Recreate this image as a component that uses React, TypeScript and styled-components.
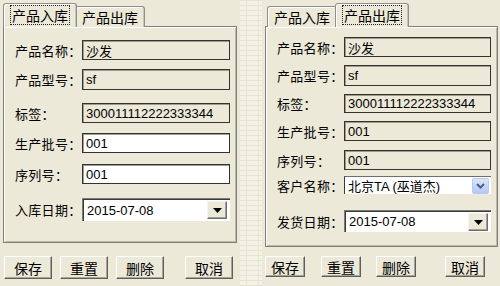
import React from "react";
import styled, { createGlobalStyle } from "styled-components";

const GlobalStyle = createGlobalStyle`
  * { box-sizing: border-box; }
  html, body { margin: 0; padding: 0; }
  body {
    font-family: "Noto Sans CJK SC", "Liberation Sans", sans-serif;
    color: #000;
    background: #ece9d8;
  }
`;

type Row = {
  label: string;
  value: string;
  kind: "text" | "date" | "select";
  disabled?: boolean;
  mt: number;
  h: number;
};

type PanelProps = {
  width: number;
  pageWidth: number;
  pageHeight: number;
  active: number;
  rows: Row[];
  btnTop: number;
  btnH: number;
  btnW: number;
  btnGaps: number[];
};

const TABS = ["产品入库", "产品出库"];

const leftRows: Row[] = [
  { label: "产品名称：", value: "沙发", kind: "text", disabled: true, mt: 13, h: 20 },
  { label: "产品型号：", value: "sf", kind: "text", disabled: true, mt: 9, h: 21 },
  { label: "标签：", value: "300011112222333344", kind: "text", disabled: true, mt: 13, h: 20 },
  { label: "生产批号：", value: "001", kind: "text", mt: 10, h: 20 },
  { label: "序列号：", value: "001", kind: "text", mt: 11, h: 20 },
  { label: "入库日期：", value: "2015-07-08", kind: "date", mt: 14, h: 23 },
];

const rightRows: Row[] = [
  { label: "产品名称：", value: "沙发", kind: "text", disabled: true, mt: 10, h: 20 },
  { label: "产品型号：", value: "sf", kind: "text", disabled: true, mt: 8, h: 21 },
  { label: "标签：", value: "300011112222333344", kind: "text", disabled: true, mt: 8, h: 19 },
  { label: "生产批号：", value: "001", kind: "text", disabled: true, mt: 8, h: 20 },
  { label: "序列号：", value: "001", kind: "text", disabled: true, mt: 9, h: 20 },
  { label: "客户名称：", value: "北京TA (巫道杰)", kind: "select", mt: 6, h: 18 },
  { label: "发货日期：", value: "2015-07-08", kind: "date", mt: 16, h: 22 },
];

const Screen = styled.div`
  display: flex;
  width: 500px;
  height: 286px;
  overflow: hidden;
`;

const Pane = styled.div<{ $w: number }>`
  width: ${({ $w }) => $w}px;
  flex: none;
  background: #ece9d8;
  padding: 3px 0 0 3px;
  display: flex;
  flex-direction: column;
`;

const Strip = styled.div`
  width: 22px;
  flex: none;
  background-color: #f4f2e6;
  background-image:
    repeating-linear-gradient(0deg, #e6e2cc 0 1px, transparent 1px 5px),
    repeating-linear-gradient(90deg, transparent 0 6px, #e9e5d1 6px 7px, transparent 7px 12px);
`;

const TabRow = styled.div`
  display: flex;
  align-items: flex-end;
  height: 24px;
  padding-left: 2px;
  position: relative;
  z-index: 1;
`;

const Tab = styled.div<{ $active: boolean }>`
  height: ${({ $active }) => ($active ? 24 : 21)}px;
  margin: ${({ $active }) => ($active ? "0 -2px 0 -2px" : "0")};
  padding: ${({ $active }) => ($active ? "1px 7px 0" : "0 5px")};
  background: #ece9d8;
  border: 1px solid #8f8f8f;
  border-bottom: none;
  border-radius: 3px 3px 0 0;
  box-shadow: inset 1px 1px 0 #fff, inset -1px 0 0 #c9c5b4;
  font-size: 14px;
  line-height: 20px;
  white-space: nowrap;
  position: relative;
  z-index: ${({ $active }) => ($active ? 2 : 1)};

  span {
    display: inline-block;
    padding: 0 1px;
    outline: ${({ $active }) => ($active ? "1px dotted #222" : "none")};
    line-height: 18px;
  }
`;

const Page = styled.div<{ $w: number; $h: number }>`
  width: ${({ $w }) => $w}px;
  height: ${({ $h }) => $h}px;
  margin-top: -1px;
  border: 1px solid #7f7f7f;
  box-shadow: inset 1px 1px 0 #fff, inset -1px -1px 0 #bdb9a6;
  background: #ece9d8;
  padding-right: 6px;
`;

const FieldRow = styled.div<{ $mt: number; $h: number }>`
  display: flex;
  align-items: center;
  margin-top: ${({ $mt }) => $mt}px;
  height: ${({ $h }) => $h}px;
`;

const Label = styled.span`
  width: 78px;
  flex: none;
  padding-left: 11px;
  font-size: 13px;
  white-space: nowrap;
  letter-spacing: 0.3px;
`;

const TextBox = styled.div<{ $disabled?: boolean }>`
  flex: 1;
  height: 100%;
  display: flex;
  align-items: center;
  padding-left: 3px;
  background: ${({ $disabled }) => ($disabled ? "#ece9d8" : "#fff")};
  border: 1px solid #333;
  box-shadow: inset 1px 1px 0 #a09c8c;
  font-family: "Liberation Sans", "Noto Sans CJK SC", sans-serif;
  font-size: 13px;
  white-space: nowrap;
  overflow: hidden;
`;

const DateBox = styled.div`
  flex: 1;
  height: 100%;
  display: flex;
  align-items: stretch;
  background: #fff;
  border-top: 1px solid #7a7a7a;
  border-left: 1px solid #7a7a7a;
  box-shadow: inset 1px 1px 0 #3a3a3a;
  padding: 2px 3px 2px 4px;
  font-family: "Liberation Sans", sans-serif;
  font-size: 13px;
`;

const DateText = styled.span`
  flex: 1;
  display: flex;
  align-items: center;
`;

const DropButton = styled.div`
  width: 20px;
  height: 18px;
  align-self: flex-start;
  background: #ece9d8;
  border: 1px solid;
  border-color: #f4f3ee #6d6d6d #6d6d6d #f4f3ee;
  box-shadow: inset -1px -1px 0 #a5a29a;
  display: flex;
  align-items: center;
  justify-content: center;
`;

const SelectBox = styled.div`
  flex: 1;
  height: 100%;
  display: flex;
  align-items: center;
  background: #fff;
  border-top: 1px solid #6e6e6e;
  border-left: 1px solid #3a3a3a;
  padding: 0 2px 0 3px;
  font-family: "Liberation Sans", "Noto Sans CJK SC", sans-serif;
  font-size: 13px;
`;

const SelectText = styled.span`
  flex: 1;
  white-space: nowrap;
`;

const XpArrow = styled.div`
  width: 17px;
  height: 16px;
  border-radius: 2px;
  background: linear-gradient(#d9e5fd, #b3c8f5);
  border: 1px solid #b6c9f2;
  display: flex;
  align-items: center;
  justify-content: center;
`;

const ButtonBar = styled.div<{ $mt: number }>`
  display: flex;
  margin-top: ${({ $mt }) => $mt}px;
`;

const Btn = styled.button<{ $w: number; $h: number; $ml: number }>`
  width: ${({ $w }) => $w}px;
  height: ${({ $h }) => $h}px;
  margin-left: ${({ $ml }) => $ml}px;
  padding: 0;
  background: #ece9d8;
  border: 1px solid;
  border-color: #fff #5f5f5f #5f5f5f #fff;
  box-shadow: inset -1px -1px 0 #a9a594;
  font-family: "Noto Sans CJK SC", sans-serif;
  font-size: 14px;
  line-height: 1;
  color: #000;
`;

const Triangle = () => (
  <svg width="9" height="5" viewBox="0 0 9 5">
    <path d="M0 0h9L4.5 5z" fill="#000" />
  </svg>
);

const Chevron = () => (
  <svg width="9" height="6" viewBox="0 0 9 6">
    <path d="M1 1l3.5 3.5L8 1" fill="none" stroke="#4d6185" strokeWidth="2" />
  </svg>
);

const Panel = (p: PanelProps) => (
  <Pane $w={p.width}>
    <TabRow>
      {TABS.map((t, i) => (
        <Tab key={t} $active={i === p.active}>
          <span>{t}</span>
        </Tab>
      ))}
    </TabRow>
    <Page $w={p.pageWidth} $h={p.pageHeight}>
      {p.rows.map((r) => (
        <FieldRow key={r.label} $mt={r.mt} $h={r.h}>
          <Label>{r.label}</Label>
          {r.kind === "text" && <TextBox $disabled={r.disabled}>{r.value}</TextBox>}
          {r.kind === "date" && (
            <DateBox>
              <DateText>{r.value}</DateText>
              <DropButton>
                <Triangle />
              </DropButton>
            </DateBox>
          )}
          {r.kind === "select" && (
            <SelectBox>
              <SelectText>{r.value}</SelectText>
              <XpArrow>
                <Chevron />
              </XpArrow>
            </SelectBox>
          )}
        </FieldRow>
      ))}
    </Page>
    <ButtonBar $mt={p.btnTop}>
      {["保存", "重置", "删除", "取消"].map((b, i) => (
        <Btn key={b} $w={p.btnW} $h={p.btnH} $ml={p.btnGaps[i]}>
          {b}
        </Btn>
      ))}
    </ButtonBar>
  </Pane>
);

export default function App() {
  return (
    <>
      <GlobalStyle />
      <Screen>
        <Panel
          width={240}
          pageWidth={234}
          pageHeight={217}
          active={0}
          rows={leftRows}
          btnTop={13}
          btnH={23}
          btnW={48}
          btnGaps={[1, 8, 8, 21]}
        />
        <Strip />
        <Panel
          width={238}
          pageWidth={233}
          pageHeight={221}
          active={1}
          rows={rightRows}
          btnTop={9}
          btnH={21}
          btnW={40}
          btnGaps={[0, 16, 15, 29]}
        />
      </Screen>
    </>
  );
}
